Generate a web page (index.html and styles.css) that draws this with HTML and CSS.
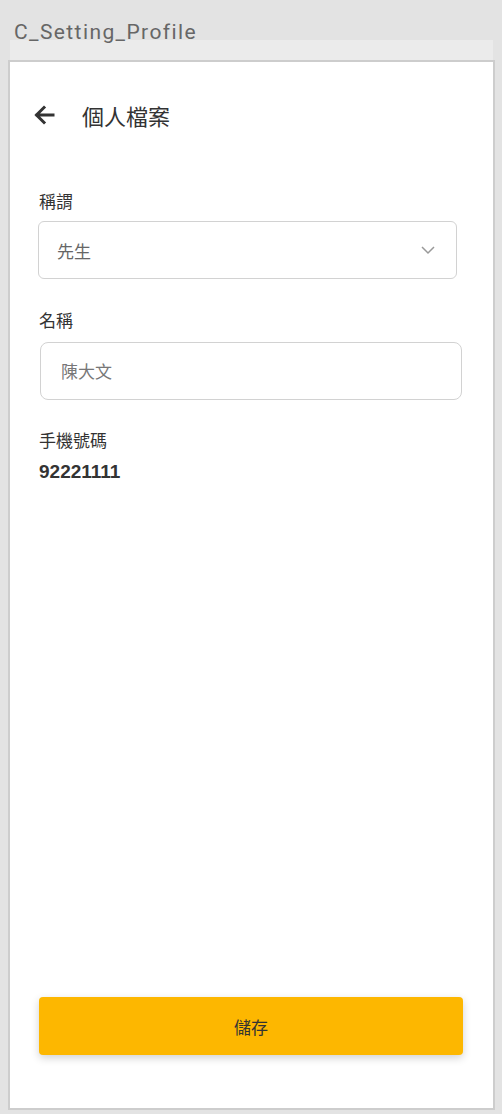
FILE: index.html
```html
<!DOCTYPE html>
<html lang="zh-Hant">
<head>
    <meta charset="UTF-8">
    <meta name="viewport" content="width=device-width, initial-scale=1.0">
    <title>C_Setting_Profile</title>
    <link rel="stylesheet" href="styles.css">
</head>
<body>
    <div class="artboard-name">C_Setting_Profile</div>
    <div class="artboard-band"></div>

    <div class="screen">
        <div class="top-bar">
            <a href="#" class="back-button" aria-label="Back">
                <svg width="22" height="20" viewBox="0 0 22 20">
                    <path d="M20 10H4M11 2.5L3.5 10l7.5 7.5" fill="none" stroke="#333" stroke-width="3" stroke-linecap="square"/>
                </svg>
            </a>
            <h1 class="page-title">個人檔案</h1>
        </div>

        <div class="field">
            <label class="field-label">稱謂</label>
            <div class="select-box">
                <span class="select-value">先生</span>
                <svg class="chevron" width="16" height="10" viewBox="0 0 16 10">
                    <path d="M2 2l6 6 6-6" fill="none" stroke="#999" stroke-width="1.5"/>
                </svg>
            </div>
        </div>

        <div class="field">
            <label class="field-label">名稱</label>
            <div class="text-input">陳大文</div>
        </div>

        <div class="field">
            <div class="field-label">手機號碼</div>
            <div class="phone-number">92221111</div>
        </div>

        <div class="spacer"></div>

        <button class="save-button">儲存</button>
    </div>
</body>
</html>
```

FILE: styles.css
```css
body {
    margin: 0;
    background-color: #e3e3e3;
    font-family: "Noto Sans CJK TC", "Noto Sans", sans-serif;
    color: #333;
}

/* Artboard title above the frame */
.artboard-name {
    height: 40px;
    padding-left: 14px;
    font-family: Roboto, "Noto Sans", sans-serif;
    font-size: 21px;
    letter-spacing: 1.4px;
    line-height: 64px;
    color: #666;
    overflow: visible;
}

.artboard-band {
    margin-left: 10px;
    width: 483px;
    height: 20px;
    background-color: #ebebeb;
}

/* The phone screen */
.screen {
    margin-left: 8px;
    width: 483px;
    height: 1046px;
    border: 2px solid #cdcdcd;
    background-color: #fff;
    display: flex;
    flex-direction: column;
}

.top-bar {
    display: flex;
    align-items: center;
    height: 30px;
    margin-top: 38px;
    padding-left: 23px;
}

.back-button {
    display: flex;
    width: 22px;
    height: 20px;
}

.page-title {
    margin: 0 0 0 27px;
    font-size: 22px;
    font-weight: 400;
    color: #333;
}

.field {
    display: flex;
    flex-direction: column;
    padding-left: 28px;
}

.field:nth-of-type(2) {
    margin-top: 61px;
}

.field:nth-of-type(3) {
    margin-top: 31px;
}

.field:nth-of-type(4) {
    margin-top: 30px;
}

.field-label {
    padding-left: 1px;
    font-size: 17px;
    line-height: 20px;
    color: #333;
}

.select-box {
    display: flex;
    align-items: center;
    justify-content: space-between;
    box-sizing: border-box;
    width: 419px;
    height: 58px;
    margin-top: 10px;
    padding: 0 20px 0 18px;
    border: 1px solid #d2d2d2;
    border-radius: 6px;
}

.select-value {
    font-size: 17px;
    color: #666;
}

.text-input {
    box-sizing: border-box;
    width: 422px;
    height: 58px;
    margin-top: 12px;
    margin-left: 2px;
    padding-left: 20px;
    border: 1px solid #d2d2d2;
    border-radius: 8px;
    font-size: 17px;
    line-height: 56px;
    color: #777;
}

.phone-number {
    margin-top: 11px;
    padding-left: 1px;
    font-family: "Liberation Sans", Arial, sans-serif;
    font-size: 19px;
    font-weight: bold;
    color: #333;
}

.spacer {
    flex: 1;
}

.save-button {
    align-self: flex-start;
    width: 424px;
    height: 58px;
    margin: 0 0 53px 29px;
    border: none;
    border-radius: 4px;
    background-color: #fdb700;
    box-shadow: 0 3px 8px rgba(0, 0, 0, 0.18);
    font-family: "Noto Sans CJK TC", sans-serif;
    font-size: 17px;
    color: #333;
    cursor: pointer;
}
```
